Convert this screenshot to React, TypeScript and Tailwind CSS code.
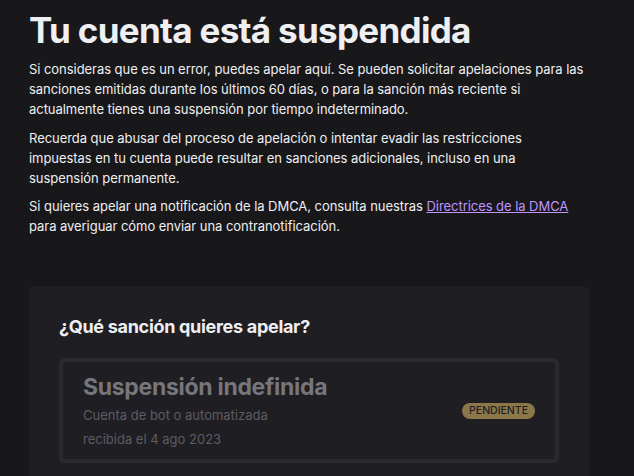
export default function App() {
  return (
    <div className="min-h-[476px] w-full bg-[#18181b] text-[#efeff1] px-[29px] pt-[6px]" style={{ fontFamily: 'Inter, "Noto Sans", sans-serif' }}>
      <h1 className="text-[35px] leading-[48px] font-bold tracking-[-0.7px] text-[#efeff1]">Tu cuenta está suspendida</h1>
      <div className="mt-[5px] w-[557px] text-[13px] leading-[20px] flex flex-col gap-[8.5px] tracking-[-0.05px]">
        <p>Si consideras que es un error, puedes apelar aquí. Se pueden solicitar apelaciones para las sanciones emitidas durante los últimos 60 días, o para la sanción más reciente si actualmente tienes una suspensión por tiempo indeterminado.</p>
        <p>Recuerda que abusar del proceso de apelación o intentar evadir las restricciones impuestas en tu cuenta puede resultar en sanciones adicionales, incluso en una suspensión permanente.</p>
        <p>Si quieres apelar una notificación de la DMCA, consulta nuestras <a className="text-[#bf94ff] underline">Directrices de la DMCA</a> para averiguar cómo enviar una contranotificación.</p>
      </div>
      <div className="mt-[50px] w-[560px] rounded-[6px] bg-[#1f1f23] px-[30px] pt-[29px] pb-[30px]">
        <h2 className="text-[18px] leading-[24px] font-bold tracking-[-0.3px]">¿Qué sanción quieres apelar?</h2>
        <div className="mt-[19px] rounded-[6px] border-[4px] border-[#29292e] px-[20px] pt-[9px] pb-[8px] flex items-start justify-between">
          <div className="flex flex-col">
            <div className="text-[23px] leading-[32px] font-bold tracking-[-0.3px] text-[#76767c]">Suspensión indefinida</div>
            <div className="text-[13px] leading-[24px] text-[#5c5c63]">Cuenta de bot o automatizada</div>
            <div className="text-[13px] leading-[24px] text-[#5c5c63]">recibida el 4 ago 2023</div>
          </div>
          <span className="mt-[32px] rounded-full bg-[#8c774b] px-[7px] text-[10.5px] leading-[16px] font-medium text-[#1f1f23]">PENDIENTE</span>
        </div>
      </div>
    </div>
  );
}
